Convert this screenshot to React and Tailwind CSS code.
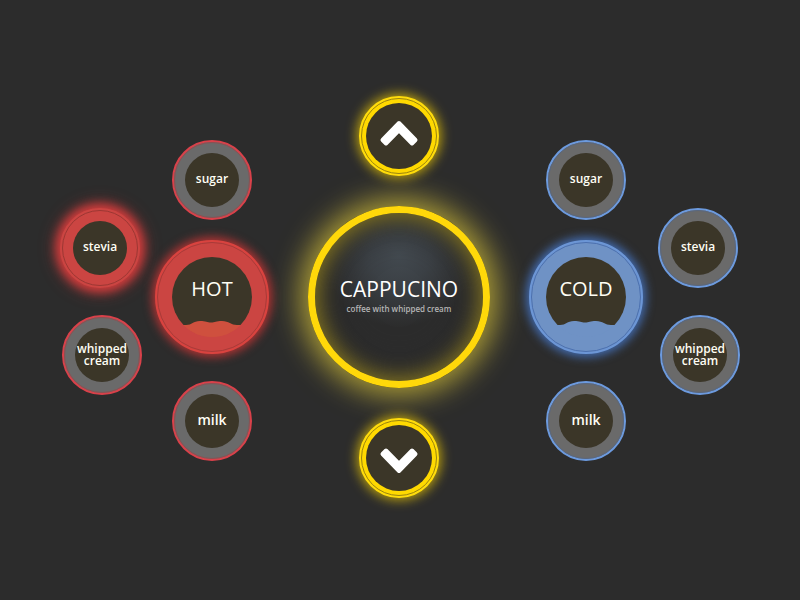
import { clsx } from "clsx";

const RING = {
  red: "border-[#d9414a]",
  blue: "border-[#6c9ade]",
};

function Extra({ label, tone, large, active, wrapped }) {
  return (
    <button
      type="button"
      aria-pressed={Boolean(active)}
      className={clsx(
        "flex size-20 shrink-0 rounded-full border-2",
        active ? "border-[#cb4542] bg-[#cb4542]" : "bg-[#6a6a6a]",
        active && "shadow-[0_0_10px_4px_#d03c3c,0_0_16px_6px_rgba(217,60,60,0.4)]",
        !active && RING[tone],
      )}
    >
      <span
        className={clsx(
          "flex size-full items-center justify-center rounded-full border",
          active ? "border-[#9c3733]" : tone === "red" ? "border-[#8b5052]" : "border-[#59677f]",
        )}
      >
        <span
          className={clsx(
            "flex size-[54px] items-center justify-center rounded-full bg-[#3b3628] text-center font-semibold text-[#fffef4]",
            large ? "text-sm" : "text-xs",
            !wrapped && "pb-0.5",
          )}
        >
          <span className="-mx-2 leading-3">{label}</span>
        </span>
      </span>
    </button>
  );
}

function Temperature({ label, tone }) {
  const red = tone === "red";
  return (
    <button
      type="button"
      className={clsx(
        "flex size-[114px] shrink-0 rounded-full border-2",
        red
          ? "border-[#d9433f] bg-[#cb4542] shadow-[0_0_10px_3px_rgba(222,55,55,0.75)]"
          : "border-[#6c96d6] bg-[#6f92c5] shadow-[0_0_10px_3px_rgba(75,130,220,0.75)]",
      )}
    >
      <span
        className={clsx(
          "flex size-full items-center justify-center rounded-full border",
          red ? "border-[#a93a38]" : "border-[#4b70b0]",
        )}
      >
        <span
          className={clsx(
            "flex size-20 flex-col items-center justify-end overflow-hidden rounded-full text-xl leading-6 font-medium text-[#fffef4]",
            red
              ? "bg-[linear-gradient(#3b3628_85%,#cf503e_85%)]"
              : "bg-[linear-gradient(#3b3628_85%,#6f92c5_85%)]",
          )}
        >
          <span>{label}</span>
          <svg viewBox="0 0 80 36" className="h-9 w-20 shrink-0" aria-hidden="true">
            <path
              d="M0 24H14C20 24 21 20 28 20C34 20 35 21.5 39 21.5C43 21.5 44 20 50 20C57 20 59 24 65 24H80V36H0Z"
              fill={red ? "#cf503e" : "#6f92c5"}
            />
          </svg>
        </span>
      </span>
    </button>
  );
}

function Step({ label, points }) {
  return (
    <button
      type="button"
      aria-label={label}
      className="flex size-20 shrink-0 rounded-full border-2 border-[#ffdc0c] bg-[#ffd900] shadow-[0_0_12px_2px_rgba(255,217,0,0.7)]"
    >
      <span className="flex size-full items-center justify-center rounded-full border border-[#9a8410]">
        <span className="flex size-[66px] items-center justify-center rounded-full bg-[#3b3628]">
          <svg viewBox="0 0 40 40" className="size-10" aria-hidden="true">
            <polygon points={points} fill="#fff" stroke="#fff" strokeWidth="4" strokeLinejoin="round" />
          </svg>
        </span>
      </span>
    </button>
  );
}

export default function App() {
  return (
    <main className="flex min-h-screen items-center justify-center bg-[#2c2c2c] pb-1.5 font-['Open_Sans',sans-serif]">
      <div className="flex w-[82px] flex-col gap-[27px] pt-2">
        <Extra label="stevia" tone="red" active />
        <div className="flex justify-end">
          <Extra label="whipped cream" tone="red" wrapped />
        </div>
      </div>

      <div className="ml-[13px] flex flex-col items-center pt-[7px]">
        <Extra label="sugar" tone="red" />
        <div className="mt-5 mb-[27px] flex">
          <Temperature label="HOT" tone="red" />
        </div>
        <Extra label="milk" tone="red" large />
      </div>

      <div className="mx-[39px] flex flex-col items-center gap-[30px]">
        <Step label="Previous drink" points="20,7 36.5,24 33,27.5 20,14.4 7,27.5 3.5,24" />
        <section className="flex size-[182px] flex-col items-center justify-center rounded-full border-[7px] border-[#ffd80a] bg-[radial-gradient(ellipse_76px_72px_at_50%_25%,#434a50_0%,#3c4146_40%,#2c2c2c_100%)] pb-1 text-center shadow-[0_0_28px_8px_rgba(255,230,60,0.6),inset_0_0_20px_4px_rgba(215,185,20,0.5),inset_0_0_34px_10px_#2c2c2c]">
          <h1 className="text-[21px] leading-7 font-medium text-white">CAPPUCINO</h1>
          <p className="text-[8px] leading-3 font-semibold text-[#b5b5b5]">coffee with whipped cream</p>
        </section>
        <Step label="Next drink" points="20,33 36.5,16 33,12.5 20,25.6 7,12.5 3.5,16" />
      </div>

      <div className="flex flex-col items-center pt-[7px]">
        <Extra label="sugar" tone="blue" />
        <div className="mt-5 mb-[27px] flex">
          <Temperature label="COLD" tone="blue" />
        </div>
        <Extra label="milk" tone="blue" large />
      </div>

      <div className="ml-[15px] flex w-[82px] flex-col gap-[27px] pt-2">
        <Extra label="stevia" tone="blue" />
        <div className="flex justify-end">
          <Extra label="whipped cream" tone="blue" wrapped />
        </div>
      </div>
    </main>
  );
}
